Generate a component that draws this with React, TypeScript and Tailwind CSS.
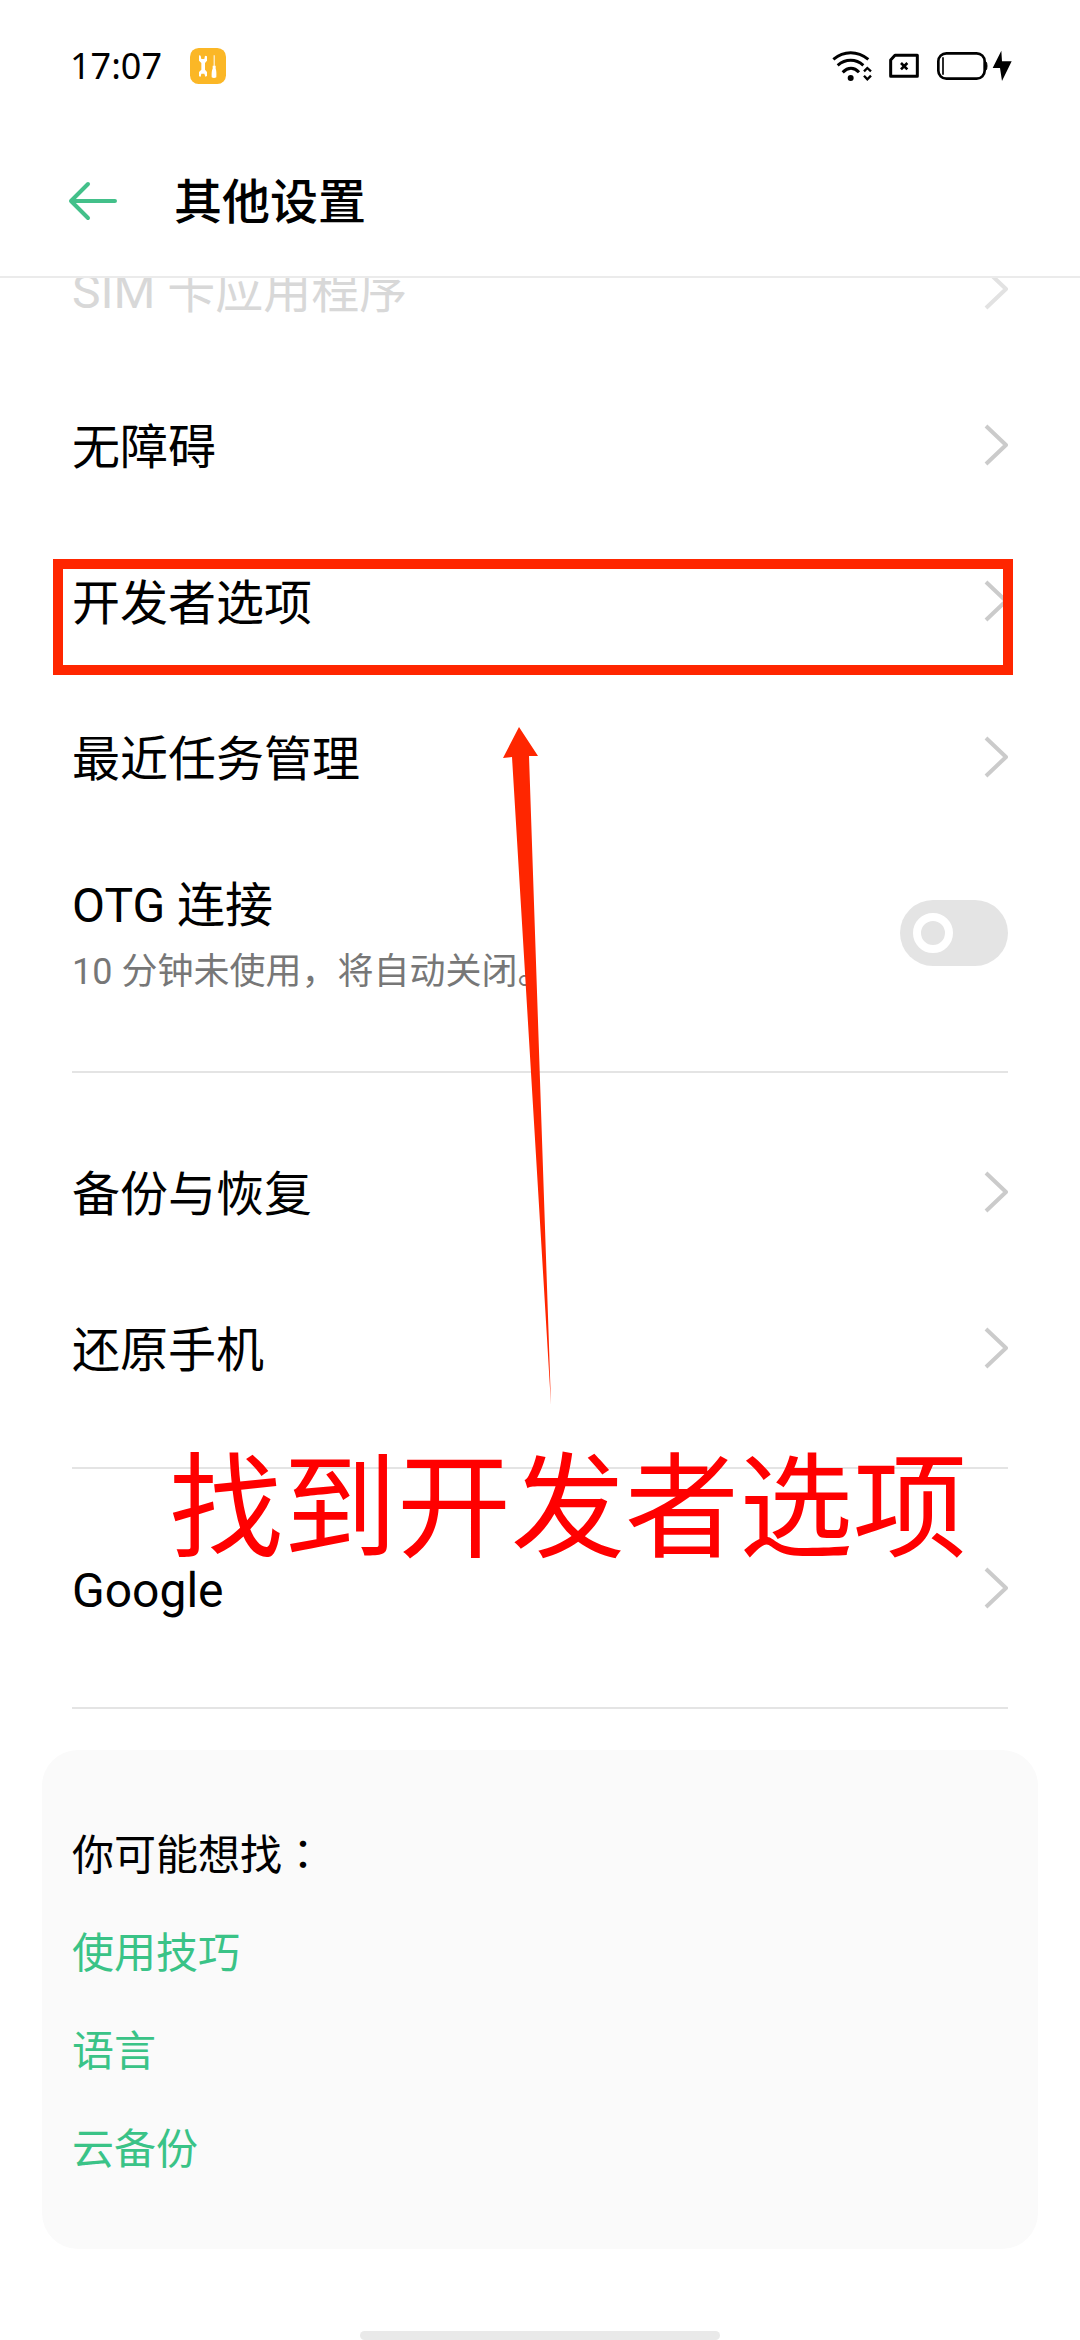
function WifiIcon() {
  return (
    <svg className="w-10 h-8" viewBox="64 60 120 96" fill="none" stroke="#000" strokeWidth="9" aria-hidden="true">
      <path d="M68 88Q92 68 120 68T173 88" />
      <path d="M81 106Q99 91 120 91T158 106" />
      <path d="M96 127Q108 115 121 115T145 127" />
      <circle cx="120" cy="144" r="9" fill="#000" stroke="none" />
      <path d="M160 124L170 114L181 124M160 137L170 148L181 137" strokeWidth="7" />
    </svg>
  );
}

function NoSimIcon() {
  return (
    <svg className="w-8 h-8" viewBox="228 60 96 96" fill="none" stroke="#000" aria-hidden="true">
      <path d="M249 76H316V139H236V90Z" strokeWidth="9" strokeLinejoin="round" />
      <path d="M267 99L286 118M286 99L267 118" strokeWidth="8" />
    </svg>
  );
}

function BatteryIcon() {
  return (
    <svg className="w-[52px] h-8" viewBox="375 60 156 96" fill="none" stroke="#000" aria-hidden="true">
      <rect x="382" y="70" width="139" height="76" rx="24" strokeWidth="8" />
      <path d="M396 82V134" strokeWidth="5" />
      <path d="M524 95Q528 97 528 108T524 121Z" fill="#000" strokeWidth="3" />
    </svg>
  );
}

function BoltIcon() {
  return (
    <svg className="w-5 h-8" viewBox="543 60 60 96" fill="#000" aria-hidden="true">
      <path d="M571 62L545 114H567L573 153L602 94H573Z" />
    </svg>
  );
}

function ToolsIcon() {
  return (
    <svg className="w-9 h-9" viewBox="0 0 108 108" aria-hidden="true">
      <rect width="108" height="108" rx="26" fill="#fbb726" />
      <path
        d="M27 22L32 23L34 33H43L45 23L51 25V38L45 45V65L51 72V84L46 86L43 77H34L32 86L27 85V72L34 65V45L27 38Z"
        fill="#fff"
      />
      <path d="M71 22H74V53H77V62Q80 68 79 88Q72 92 65 88Q64 68 68 62V53H71Z" fill="#fff" />
    </svg>
  );
}

function Chevron({ disabled = false }: { disabled?: boolean }) {
  return (
    <svg
      className={disabled ? "w-6 h-[42px] text-[#e2e2e2]" : "w-6 h-[42px] text-[#cbcbcb]"}
      viewBox="0 0 24 42"
      fill="none"
      stroke="currentColor"
      strokeWidth="4"
      strokeLinejoin="round"
      aria-hidden="true"
    >
      <path d="M2 2L22 21L2 40" />
    </svg>
  );
}

function Row({ title, disabled = false, marked = false }: { title: string; disabled?: boolean; marked?: boolean }) {
  return (
    <li className="relative">
      <button
        type="button"
        disabled={disabled}
        className="flex w-full h-[156px] items-center justify-between text-left text-[48px] disabled:text-[#d8d8d8]"
      >
        <span className="pt-1.5">{title}</span>
        <Chevron disabled={disabled} />
      </button>
      {marked && (
        <div className="pointer-events-none absolute top-9 -left-[19px] -right-[5px] h-[116px] border-[10px] border-[#ff2600]" />
      )}
    </li>
  );
}

function OtgRow() {
  return (
    <li className="flex h-[195px] items-center justify-between">
      <label htmlFor="otg" className="flex flex-col pt-1.5">
        <span className="text-[48px] leading-[72px]">OTG 连接</span>
        <span className="text-[36px] leading-[60px] text-[#777]">10 分钟未使用，将自动关闭。</span>
      </label>
      <span className="relative flex">
        <input
          id="otg"
          type="checkbox"
          role="switch"
          className="peer h-[66px] w-[108px] appearance-none rounded-full bg-[#e4e4e4] checked:bg-[#3ac387]"
        />
        <span className="pointer-events-none absolute top-[13px] left-[13px] size-10 rounded-full border-8 border-white peer-checked:left-[55px]" />
      </span>
    </li>
  );
}

const groups = [
  [{ title: "备份与恢复" }, { title: "还原手机" }],
  [{ title: "Google" }],
];

const suggestions = ["使用技巧", "语言", "云备份"];

export default function App() {
  return (
    <div
      lang="zh-CN"
      className="relative flex min-h-screen flex-col overflow-hidden bg-white text-black font-[Roboto,'Noto_Sans_CJK_SC',sans-serif]"
    >
      <div className="flex h-[132px] items-center justify-between pl-[70px] pr-[68px]">
        <div className="flex items-center gap-7">
          <span className="font-['Noto_Sans',sans-serif] text-[36px]">17:07</span>
          <ToolsIcon />
        </div>
        <div className="flex items-center">
          <WifiIcon />
          <span className="ml-4 flex">
            <NoSimIcon />
          </span>
          <span className="ml-4 mr-1 flex">
            <BatteryIcon />
          </span>
          <BoltIcon />
        </div>
      </div>

      <header className="relative z-10 flex h-[146px] items-center gap-14 border-b-2 border-[#ebebeb] bg-white px-[68px] pb-1.5">
        <button type="button" aria-label="返回">
          <svg
            className="h-10 w-[50px]"
            viewBox="0 0 50 40"
            fill="none"
            stroke="#43c08a"
            strokeWidth="4"
            strokeLinecap="round"
            strokeLinejoin="round"
          >
            <path d="M47 20H3M20 3L3 20L20 37" />
          </svg>
        </button>
        <h1 className="pt-1 text-[48px] font-medium">其他设置</h1>
      </header>

      {/* list is scrolled, so the first row sits partly under the header */}
      <main className="relative -mt-[67px] flex-1">
        <ul className="px-[72px]">
          <Row title="SIM 卡应用程序" disabled />
          <Row title="无障碍" />
          <Row title="开发者选项" marked />
          <Row title="最近任务管理" />
          <OtgRow />
        </ul>
        {groups.map((rows, i) => (
          <ul key={i} className="mx-[72px] mt-[41px] border-t-2 border-[#e4e4e4] pt-[41px]">
            {rows.map((row) => (
              <Row key={row.title} title={row.title} />
            ))}
          </ul>
        ))}
        <hr className="mx-[72px] mt-[41px] border-t-2 border-[#e4e4e4]" />

        <section className="mx-[42px] mt-[41px] rounded-[36px] bg-[#fafafa] px-[30px] pt-[57px] pb-[50px] text-[42px] leading-[98px]">
          <h2>
            你可能想找<span lang="zh-TW">：</span>
          </h2>
          <ul>
            {suggestions.map((s) => (
              <li key={s} className="text-[#3ac387]">
                <a href="#">{s}</a>
              </li>
            ))}
          </ul>
        </section>

        <svg
          className="pointer-events-none absolute top-[516px] left-[500px] h-[680px] w-[54px]"
          viewBox="0 0 54 680"
          fill="#ff2600"
          aria-hidden="true"
        >
          <path d="M19 0L38 29L29 29L51 678L12 30L3 31Z" />
        </svg>
        <p className="pointer-events-none absolute top-[1226px] left-[169px] whitespace-nowrap text-[114px] leading-[144px] text-[#ff0000]">
          找到开发者选项
        </p>
      </main>

      <div className="mx-auto h-[9px] w-1/3 rounded-full bg-[#e9e9e9]" />
    </div>
  );
}
